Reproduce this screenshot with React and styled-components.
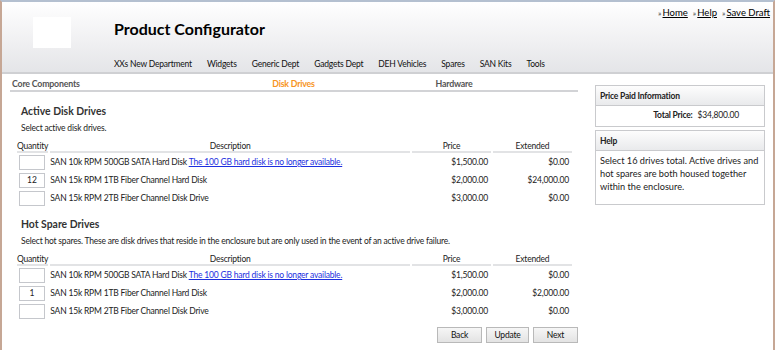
import React from 'react';
import styled, { createGlobalStyle } from 'styled-components';

const FONT = `Lato, "Open Sans", "DejaVu Sans", sans-serif`;

const GlobalStyle = createGlobalStyle`
  html, body {
    margin: 0;
    padding: 0;
    background: #fff;
  }
  body {
    font-family: ${FONT};
    font-size: 8.5px;
    letter-spacing: -0.2px;
    color: #222;
  }
`;

const Frame = styled.div`
  box-sizing: border-box;
  width: 775px;
  height: 350px;
  border-top: 2px solid #b4c0d0;
  border-left: 2px solid #c6a795;
  border-right: 2px solid #c6a795;
  overflow: hidden;
`;

const Header = styled.header`
  display: grid;
  grid-template-columns: 38px 43px 1fr auto;
  grid-template-rows: 55px 15px;
  padding-left: 31px;
  background: linear-gradient(#fff 0%, #f8f8f9 25%, #efeff1 60%, #e4e5e8 100%);
  border-bottom: 2px solid #cfd0d3;
`;

const Logo = styled.div`
  grid-column: 1;
  grid-row: 1;
  margin-top: 15px;
  height: 31px;
  background: #fff;
`;

const Title = styled.h1`
  grid-column: 3;
  grid-row: 1;
  margin: 17px 0 0;
  font-size: 16px;
  letter-spacing: 0;
  font-weight: 700;
  color: #000;
`;

const TopLinks = styled.div`
  grid-column: 4;
  grid-row: 1;
  display: flex;
  gap: 5px;
  padding: 5px 3px 0 0;
  font-size: 9.5px;
  letter-spacing: 0;
`;

const TopLink = styled.a`
  color: #000;
  text-decoration: underline;
  &::before {
    content: '»';
    font-size: 8px;
    display: inline-block;
    margin-right: 1px;
    color: #333;
  }
`;

const Nav = styled.nav`
  grid-column: 3 / 5;
  grid-row: 2;
  display: flex;
  align-items: center;
  gap: 15px;
  padding-bottom: 1px;
  color: #111;
`;

const Main = styled.div`
  display: flex;
  padding-left: 8px;
`;

const Content = styled.div`
  flex: none;
  width: 568px;
`;

const Steps = styled.div`
  display: grid;
  grid-template-columns: 189px 189px 132px 1fr;
  margin-top: 4px;
  padding-bottom: 1px;
  border-bottom: 2px solid #d2d3d6;
  font-weight: 700;
  font-size: 8.8px;
`;

const Step = styled.div`
  color: ${(p) => (p.$active ? '#f7941d' : '#555')};
  text-align: ${(p) => (p.$left ? 'left' : 'center')};
  padding-left: ${(p) => (p.$left ? '2px' : '0')};
`;

const Section = styled.section`
  padding: ${(p) => (p.$first ? '13px' : '11px')} 0 0 7px;
`;

const SectionTitle = styled.h2`
  margin: 0 0 0 4px;
  font-size: 10.4px;
  letter-spacing: 0;
  font-weight: 700;
  color: #333;
`;

const Note = styled.p`
  margin: 6px 0 8px 4px;
`;

const Table = styled.table`
  border-collapse: separate;
  border-spacing: 2px 0;
  width: 559px;
  margin-left: -2px;
`;

const Th = styled.th`
  font-weight: 400;
  text-align: ${(p) => p.$align || 'center'};
  width: ${(p) => p.$w || 'auto'};
  padding: 0;
  border-bottom: 2px solid #e2e3e5;
`;

const Td = styled.td`
  height: 18px;
  padding: 0 3px 0 ${(p) => (p.$first ? '2px' : '0')};
  text-align: ${(p) => p.$align || 'left'};
  white-space: nowrap;
`;

const Qty = styled.input`
  box-sizing: border-box;
  display: block;
  width: 26px;
  height: 15px;
  margin: 0;
  padding: 0;
  border: 1px solid #c5c7cc;
  font-family: ${FONT};
  font-size: 8.5px;
  text-align: center;
  color: #222;
`;

const Warn = styled.a`
  color: #1c2fe0;
  text-decoration: underline;
`;

const Actions = styled.div`
  display: flex;
  justify-content: flex-end;
  gap: 4px;
  margin-top: 7px;
`;

const Button = styled.button`
  width: ${(p) => p.$w || '45px'};
  height: 16px;
  padding: 0;
  border: 1px solid #b9b9b9;
  background: linear-gradient(#f6f6f6, #e3e3e3);
  font-family: ${FONT};
  font-size: 8.5px;
  letter-spacing: -0.2px;
  color: #111;
`;

const Sidebar = styled.aside`
  flex: none;
  width: 170px;
  margin: 11px 0 0 17px;
  display: flex;
  flex-direction: column;
  gap: 3px;
`;

const Panel = styled.div`
  border: 1px solid #c9cacd;
`;

const PanelHead = styled.div`
  height: 19px;
  line-height: 20px;
  padding-left: 4px;
  background: linear-gradient(#fdfdfd, #e9eaec);
  border-bottom: 1px solid #c9cacd;
  font-weight: 700;
`;

const PanelBody = styled.div`
  padding: ${(p) => p.$pad || '3px 1px 11px 4px'};
  line-height: 13px;
  font-size: ${(p) => (p.$total ? '8.5px' : '9.2px')};
  letter-spacing: ${(p) => (p.$total ? '-0.2px' : '0')};
  display: ${(p) => (p.$total ? 'flex' : 'block')};
  justify-content: flex-end;
  gap: 5px;
`;

const Strong = styled.span`
  font-weight: 700;
`;

const drives = [
  { name: 'SAN 10k RPM 500GB SATA Hard Disk', price: 1500, warn: true },
  { name: 'SAN 15k RPM 1TB Fiber Channel Hard Disk', price: 2000 },
  { name: 'SAN 15k RPM 2TB Fiber Channel Disk Drive', price: 3000 },
];

const money = (n) =>
  '$' + n.toLocaleString('en-US', { minimumFractionDigits: 2, maximumFractionDigits: 2 });

const DriveTable = ({ qty }) => (
  <Table>
    <thead>
      <tr>
        <Th $align="left" $w="30px">Quantity</Th>
        <Th>Description</Th>
        <Th $w="79px">Price</Th>
        <Th $w="79px">Extended</Th>
      </tr>
    </thead>
    <tbody>
      {drives.map((d, i) => (
        <tr key={d.name}>
          <Td $first>
            <Qty defaultValue={qty[i] || ''} />
          </Td>
          <Td>
            {d.name}{' '}
            {d.warn && <Warn href="#">The 100 GB hard disk is no longer available.</Warn>}
          </Td>
          <Td $align="right">{money(d.price)}</Td>
          <Td $align="right">{money(d.price * (qty[i] || 0))}</Td>
        </tr>
      ))}
    </tbody>
  </Table>
);

export default function App() {
  return (
    <Frame>
      <GlobalStyle />
      <Header>
        <Logo />
        <Title>Product Configurator</Title>
        <TopLinks>
          <TopLink href="#">Home</TopLink>
          <TopLink href="#">Help</TopLink>
          <TopLink href="#">Save Draft</TopLink>
        </TopLinks>
        <Nav>
          <span>XXs New Department</span>
          <span>Widgets</span>
          <span>Generic Dept</span>
          <span>Gadgets Dept</span>
          <span>DEH Vehicles</span>
          <span>Spares</span>
          <span>SAN Kits</span>
          <span>Tools</span>
        </Nav>
      </Header>
      <Main>
        <Content>
          <Steps>
            <Step $left>Core Components</Step>
            <Step $active>Disk Drives</Step>
            <Step>Hardware</Step>
          </Steps>
          <Section $first>
            <SectionTitle>Active Disk Drives</SectionTitle>
            <Note>Select active disk drives.</Note>
            <DriveTable qty={[0, 12, 0]} />
          </Section>
          <Section>
            <SectionTitle>Hot Spare Drives</SectionTitle>
            <Note>
              Select hot spares. These are disk drives that reside in the enclosure but are only
              used in the event of an active drive failure.
            </Note>
            <DriveTable qty={[0, 1, 0]} />
          </Section>
          <Actions>
            <Button>Back</Button>
            <Button $w="43px">Update</Button>
            <Button>Next</Button>
          </Actions>
        </Content>
        <Sidebar>
          <Panel>
            <PanelHead>Price Paid Information</PanelHead>
            <PanelBody $total $pad="3px 25px 4px 4px">
              <Strong>Total Price:</Strong>
              <span>$34,800.00</span>
            </PanelBody>
          </Panel>
          <Panel>
            <PanelHead>Help</PanelHead>
            <PanelBody>
              Select 16 drives total. Active drives and hot spares are both housed together
              within the enclosure.
            </PanelBody>
          </Panel>
        </Sidebar>
      </Main>
    </Frame>
  );
}
